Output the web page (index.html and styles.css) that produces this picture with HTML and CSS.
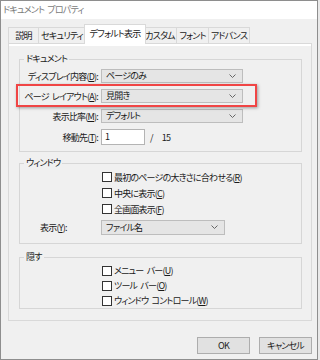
FILE: index.html
```html
<!DOCTYPE html>
<html lang="ja">

<head>
    <meta charset="utf-8" />
    <title>ドキュメント プロパティ</title>
    <link rel="stylesheet" href="styles.css">
</head>

<body>
    <div class="window">
        <div class="titlebar">ドキュメント プロパティ</div>

        <div class="content">
            <!-- タブ -->
            <div class="tabs">
                <div class="tab tab-desc">説明</div>
                <div class="tab tab-sec">セキュリティ</div>
                <div class="tab active">デフォルト表示</div>
                <div class="tab tab-custom">カスタム</div>
                <div class="tab tab-font">フォント</div>
                <div class="tab tab-adv">アドバンス</div>
            </div>

            <div class="panel">
                <!-- ドキュメント -->
                <fieldset class="group group-doc">
                    <legend>ドキュメント</legend>
                    <div class="form">
                        <label>ディスプレイ内容(<u>D</u>):</label>
                        <div class="combo">ページのみ
                            <svg class="chev" width="7" height="4" viewBox="0 0 7 4"><polyline points="0.5,0.5 3.5,3.5 6.5,0.5" /></svg>
                        </div>

                        <label>ページ レイアウト(<u>A</u>):</label>
                        <div class="combo">見開き
                            <svg class="chev" width="7" height="4" viewBox="0 0 7 4"><polyline points="0.5,0.5 3.5,3.5 6.5,0.5" /></svg>
                        </div>

                        <label>表示比率(<u>M</u>):</label>
                        <div class="combo">デフォルト
                            <svg class="chev" width="7" height="4" viewBox="0 0 7 4"><polyline points="0.5,0.5 3.5,3.5 6.5,0.5" /></svg>
                        </div>

                        <label>移動先(<u>T</u>):</label>
                        <div class="goto">
                            <div class="textbox">1</div>
                            <span class="slash">/</span>
                            <span class="total">15</span>
                        </div>
                    </div>
                </fieldset>

                <!-- ウィンドウ -->
                <fieldset class="group group-win">
                    <legend>ウィンドウ</legend>
                    <div class="checks">
                        <div class="check"><span class="box"></span>最初のページの大きさに合わせる(<u>R</u>)</div>
                        <div class="check"><span class="box"></span>中央に表示(<u>C</u>)</div>
                        <div class="check"><span class="box"></span>全画面表示(<u>F</u>)</div>
                    </div>
                    <div class="show-row">
                        <label>表示(<u>Y</u>):</label>
                        <div class="combo combo-short">ファイル名
                            <svg class="chev" width="7" height="4" viewBox="0 0 7 4"><polyline points="0.5,0.5 3.5,3.5 6.5,0.5" /></svg>
                        </div>
                    </div>
                </fieldset>

                <!-- 隠す -->
                <fieldset class="group group-hide">
                    <legend>隠す</legend>
                    <div class="checks">
                        <div class="check"><span class="box"></span>メニュー バー(<u>U</u>)</div>
                        <div class="check"><span class="box"></span>ツール バー(<u>O</u>)</div>
                        <div class="check"><span class="box"></span>ウィンドウ コントロール(<u>W</u>)</div>
                    </div>
                </fieldset>
            </div>

            <div class="buttons">
                <div class="btn">OK</div>
                <div class="btn">キャンセル</div>
            </div>
        </div>

        <!-- 赤枠の強調 -->
        <div class="highlight"></div>
    </div>
</body>
</html>
```

FILE: styles.css
```css
html,
body {
    margin: 0;
    background: #e9e9e9;
}

.window {
    position: relative;
    width: 318px;
    height: 360px;
    box-sizing: border-box;
    border: 1px solid #8e8e8e;
    background: #f0f0f0;
    font-family: "Noto Sans CJK JP", sans-serif;
    font-size: 9px;
    font-feature-settings: "palt";
    letter-spacing: -0.8px;
    word-spacing: 2px;
    color: #1a1a1a;
}

.titlebar {
    height: 18px;
    line-height: 18px;
    padding-left: 2px;
    background: #fff;
    color: #7a7a7a;
}

.content {
    padding: 5px 5px 0 7px;
}

/* タブ */
.tabs {
    display: flex;
    align-items: flex-end;
    height: 19px;
}

.tab {
    position: relative;
    height: 16px;
    line-height: 15px;
    box-sizing: border-box;
    margin-left: -1px;
    border: 1px solid #d9d9d9;
    border-bottom: none;
    background: #f0f0f0;
    text-align: center;
}

.tab-desc {
    width: 31px;
    margin-left: 0;
}

.tab-sec {
    width: 48px;
}

.tab-custom {
    width: 34px;
}

.tab-font {
    width: 33px;
}

.tab-adv {
    width: 42px;
}

.tab.active {
    width: 62px;
    height: 20px;
    line-height: 18px;
    margin: 0 -2px -1px -2px;
    background: #fff;
    z-index: 2;
}

.panel {
    height: 278px;
    box-sizing: border-box;
    border: 1px solid #d9d9d9;
    box-shadow: inset 0 2px 0 #fff;
    padding: 9px 9px 0 10px;
}

/* グループ */
.group {
    margin: 0;
    padding: 4px 0 6px 4px;
    border: 1px solid #d6d6d6;
}

.group legend {
    padding: 0 2px;
    line-height: 12px;
}

.group-win {
    margin-top: 5px;
    padding: 0 0 8px 4px;
}

.group-hide {
    margin-top: 7px;
    padding: 0 0 0 4px;
}

.form {
    display: grid;
    grid-template-columns: 74px 142px;
    column-gap: 3px;
    row-gap: 6px;
    align-items: center;
}

.form label {
    justify-self: end;
    white-space: nowrap;
}

.combo {
    position: relative;
    height: 14px;
    line-height: 12px;
    box-sizing: border-box;
    padding-left: 4px;
    border: 1px solid #bdbdbd;
    background: #e5e5e5;
}

.combo-short {
    width: 124px;
}

.chev {
    position: absolute;
    right: 6px;
    top: 4px;
    fill: none;
    stroke: #666;
    stroke-width: 1;
}

.goto {
    display: flex;
    align-items: center;
}

.textbox {
    width: 44px;
    height: 16px;
    line-height: 14px;
    box-sizing: border-box;
    padding-left: 3px;
    border: 1px solid #b4b4b4;
    background: #fff;
}

.slash {
    margin-left: 5px;
}

.total {
    margin-left: 9px;
}

/* チェックボックス */
.checks {
    margin-left: 78px;
}

.check {
    display: flex;
    align-items: center;
    height: 16px;
    white-space: nowrap;
}

.group-hide .check {
    height: 15px;
}

.box {
    width: 10px;
    height: 10px;
    box-sizing: border-box;
    border: 1px solid #333;
    background: #fff;
    margin-right: 2px;
}

.show-row {
    display: flex;
    align-items: center;
    margin-top: 3px;
}

.show-row label {
    width: 77px;
    padding-left: 16px;
    box-sizing: border-box;
}

.show-row .combo {
    height: 15px;
    line-height: 13px;
}

/* ボタン */
.buttons {
    display: flex;
    justify-content: flex-end;
    gap: 9px;
    margin-top: 16px;
}

.btn {
    width: 53px;
    height: 17px;
    line-height: 15px;
    box-sizing: border-box;
    border: 1px solid #adadad;
    background: #e1e1e1;
    text-align: center;
}

.highlight {
    position: absolute;
    left: 15px;
    top: 83px;
    width: 241px;
    height: 23px;
    box-sizing: border-box;
    border: 2px solid #f04545;
    box-shadow: 1px 1px 3px rgba(0, 0, 0, 0.35);
}
```
